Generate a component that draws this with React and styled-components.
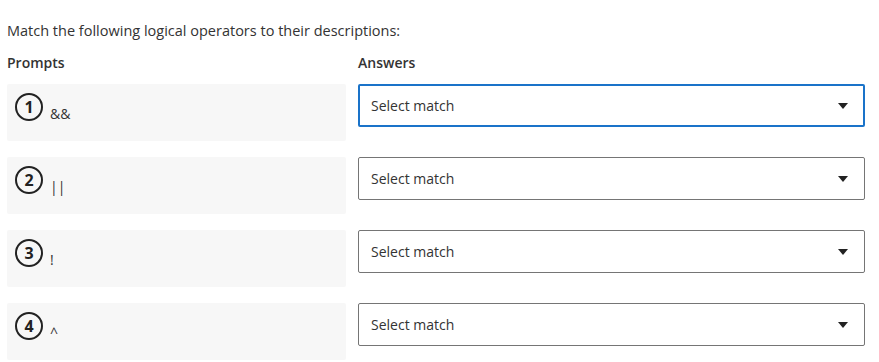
import React, { useState } from "react";
import styled, { createGlobalStyle } from "styled-components";

const Global = createGlobalStyle`
body {
  margin: 0;
  background: #fff;
  font-family: "Open Sans", "Noto Sans", sans-serif;
  color: #333;
}
`

const Container = styled.div`
padding: 20px 14px 0 7px;
`

const Instruction = styled.p`
margin: 0 0 12px 0;
font-size: 14.5px;
line-height: 21px;
color: #333;
`

const Grid = styled.div`
display: grid;
grid-template-columns: 339px 1fr;
column-gap: 12px;
row-gap: 16px;
align-items: start;
`

const Heading = styled.div`
font-size: 14px;
font-weight: 600;
line-height: 20px;
color: #333;
margin-bottom: -5px;
`

const Prompt = styled.div`
height: 57px;
box-sizing: border-box;
background: #f7f7f7;
border-radius: 2px;
padding: 9px 8px;
display: flex;
align-items: flex-start;
gap: 7px;
`

const Num = styled.span`
width: 28px;
height: 28px;
box-sizing: border-box;
border: 2px solid #222;
border-radius: 50%;
display: flex;
align-items: center;
justify-content: center;
font-size: 16px;
font-weight: 700;
color: #222;
flex-shrink: 0;
`

const PromptText = styled.span`
font-size: 14px;
color: #333;
padding-top: 11px;
line-height: 20px;
`

const Select = styled.div`
height: 43px;
box-sizing: border-box;
border: ${p => (p.focused ? "2px solid #1a73c9" : "1px solid #757575")};
border-radius: 2px;
display: flex;
align-items: center;
justify-content: space-between;
padding: ${p => (p.focused ? "0 15px 0 11px" : "0 16px 0 12px")};
font-size: 14px;
color: #333;
background: #fff;
`

const Caret = () => (
  <svg width="10" height="6" viewBox="0 0 10 6">
    <path d="M0 0 H10 L5 6 Z" fill="#222" />
  </svg>
)

const prompts = ["&&", "||", "!", "^"]

const App = () => {
  const [focus] = useState(0)
  return (
    <Container>
      <Global />
      <Instruction>Match the following logical operators to their descriptions:</Instruction>
      <Grid>
        <Heading>Prompts</Heading>
        <Heading>Answers</Heading>
        {prompts.map((p, i) => (
          <React.Fragment key={i}>
            <Prompt>
              <Num>{i + 1}</Num>
              <PromptText>{p}</PromptText>
            </Prompt>
            <Select focused={i === focus}>
              <span>Select match</span>
              <Caret />
            </Select>
          </React.Fragment>
        ))}
      </Grid>
    </Container>
  )
}

export default App
